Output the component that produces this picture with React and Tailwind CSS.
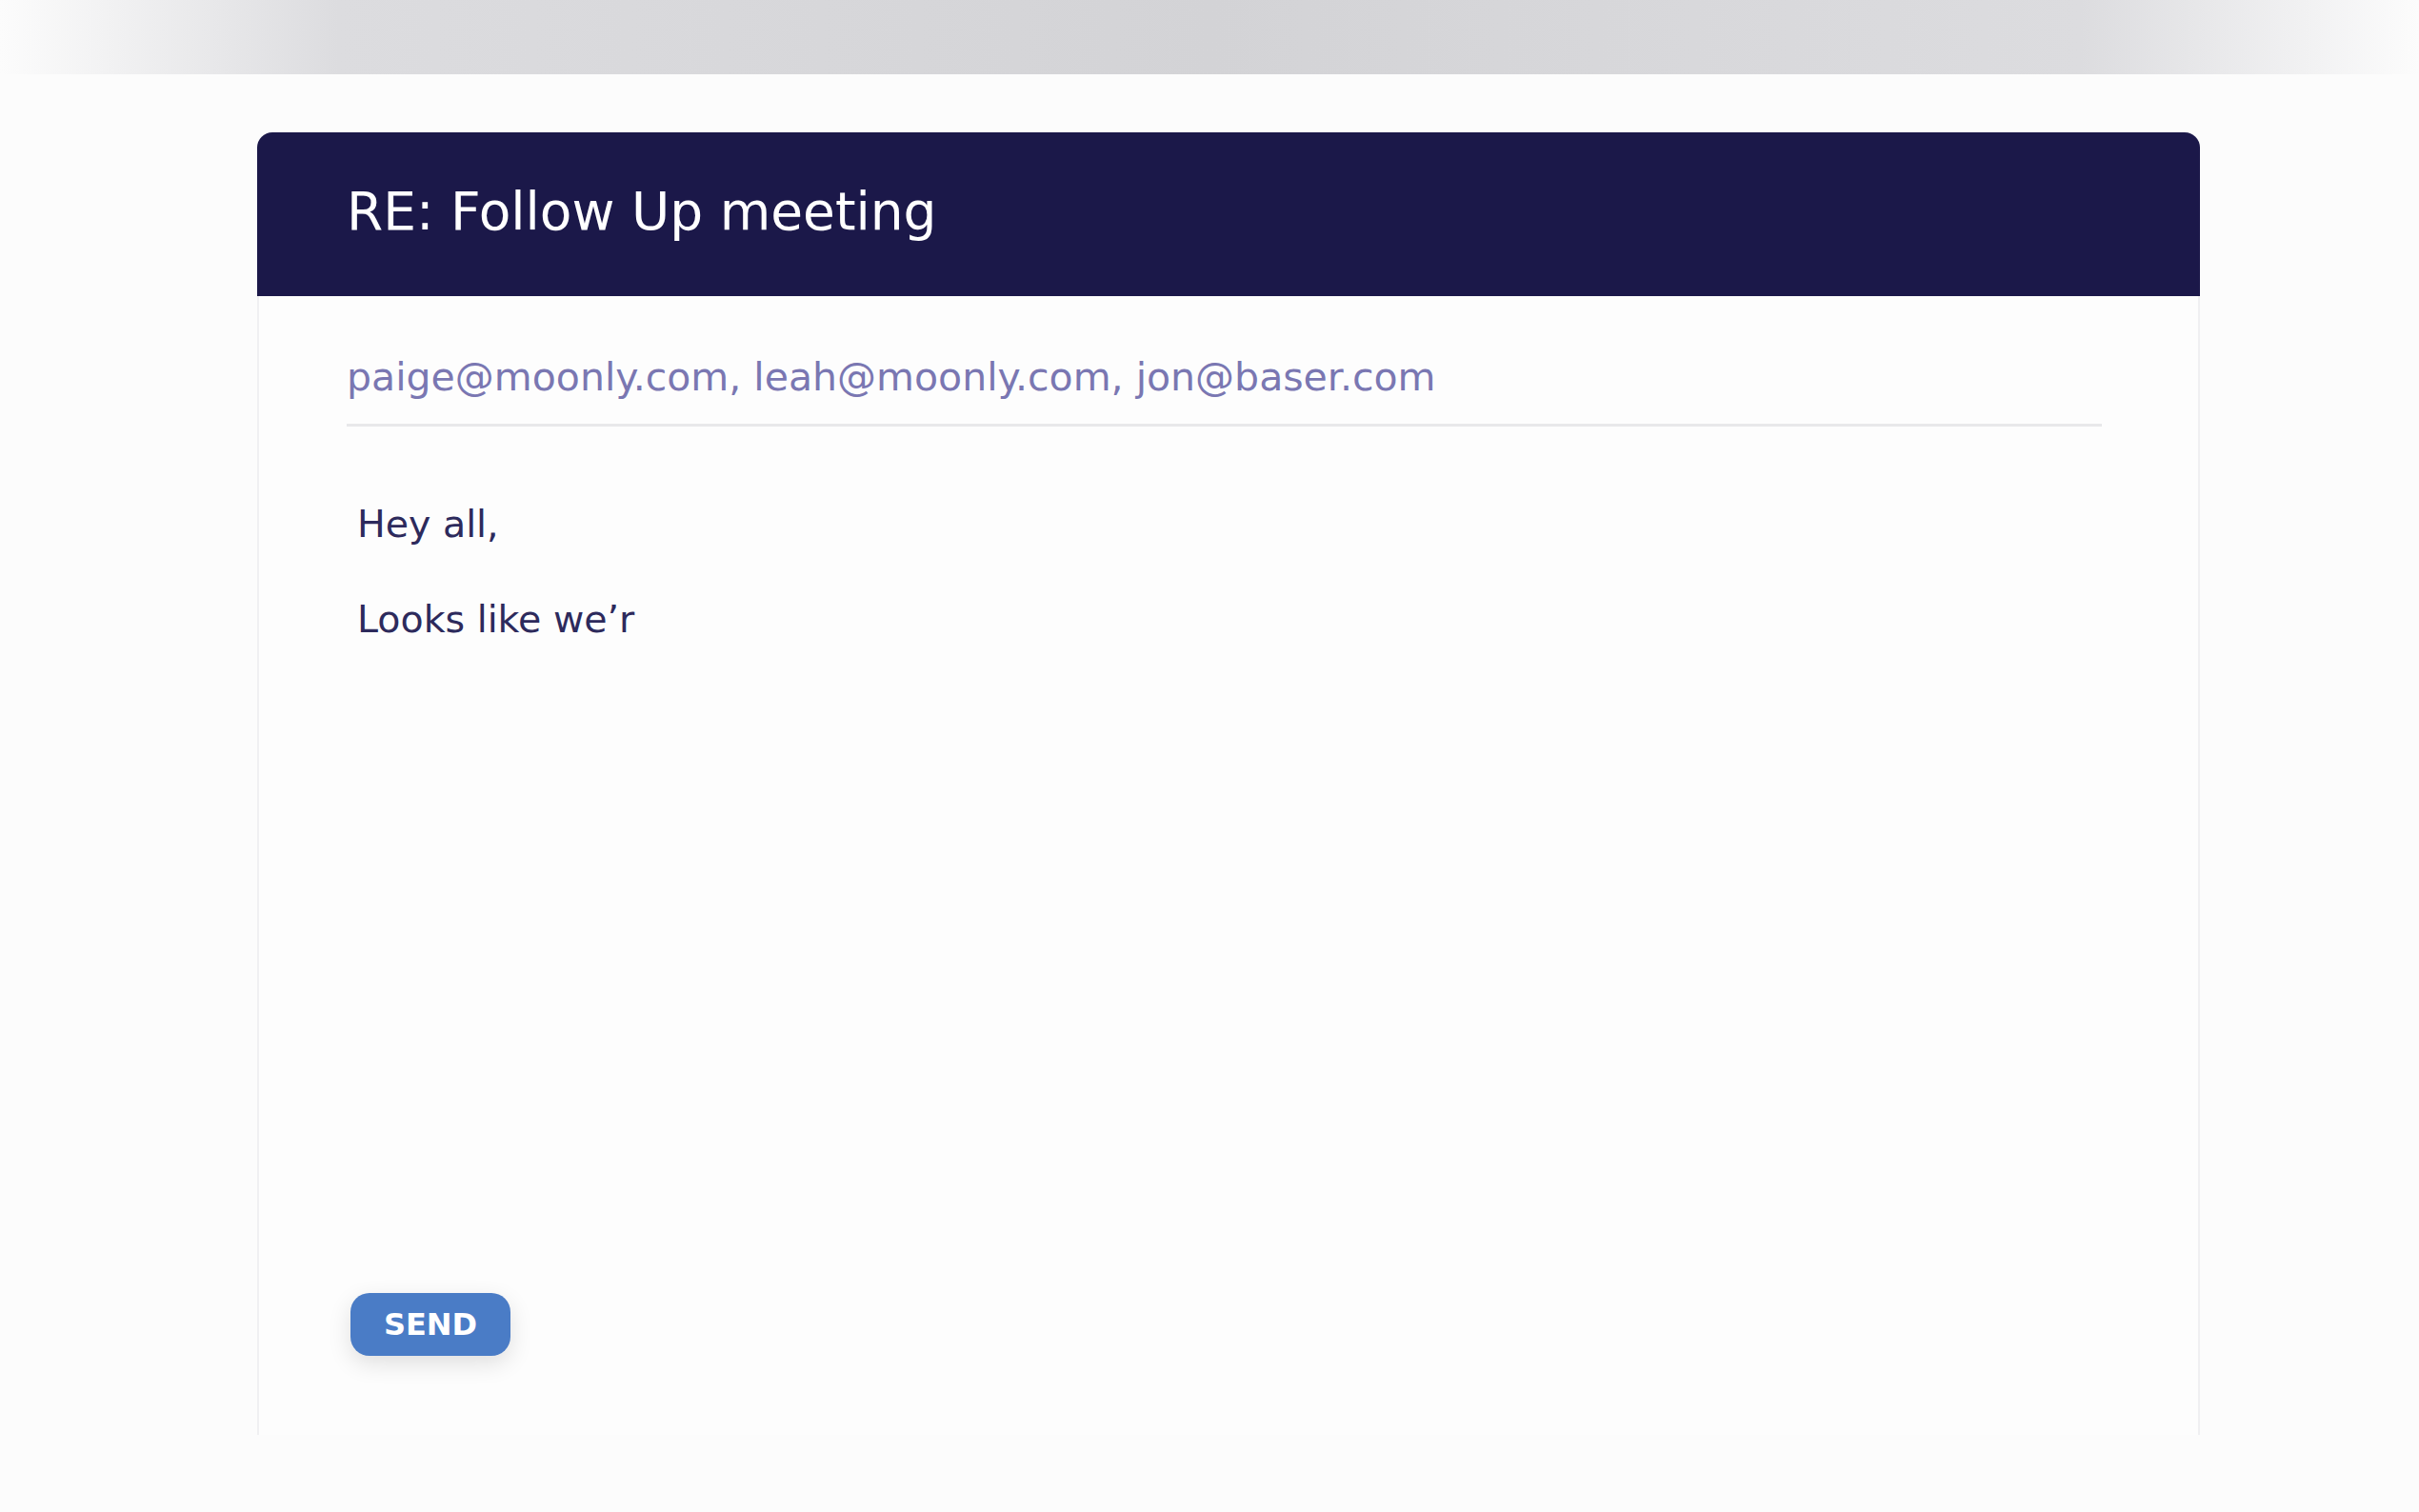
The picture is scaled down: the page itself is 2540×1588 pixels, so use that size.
export default function App() {
  return (
    <div className="min-h-[1588px] bg-[#fcfcfc] font-['DejaVu_Sans',sans-serif]">
      <div className="h-[78px] bg-[linear-gradient(to_right,#fcfcfc_0%,#dcdcdf_14%,#d3d3d6_50%,#dcdcdf_86%,#fcfcfc_100%)]" />

      <div className="ml-[270px] mt-[61px] w-[2040px]">
        <div className="flex h-[172px] items-center rounded-t-[16px] bg-[#1b1849] pb-[6px] pl-[94px]">
          <h1 className="text-[55px] leading-none text-white">RE: Follow Up meeting</h1>
        </div>

        <div className="flex h-[1196px] flex-col border-x-2 border-[#f0f0f2] bg-[#fdfdfd] pb-[83px] pl-[92px] pr-[101px]">
          <div className="border-b-[3px] border-[#e8e8ea] pb-[26px] pt-[62px]">
            <p className="text-[41px] leading-[46px] text-[#7a77b2]">
              paige@moonly.com, leah@moonly.com, jon@baser.com
            </p>
          </div>

          <div className="flex flex-col gap-[40px] pl-[11px] pt-[72px] text-[39.5px] leading-[60px] text-[#2d2a5c]">
            <p>Hey all,</p>
            <p>Looks like we’r</p>
          </div>

          <div className="mt-auto pl-[4px]">
            <button className="flex h-[66px] w-[168px] items-center justify-center rounded-[20px] bg-[#4a7cc6] text-[32px] font-bold text-white shadow-[0_8px_24px_rgba(0,0,0,0.12)]">
              SEND
            </button>
          </div>
        </div>
      </div>
    </div>
  );
}
